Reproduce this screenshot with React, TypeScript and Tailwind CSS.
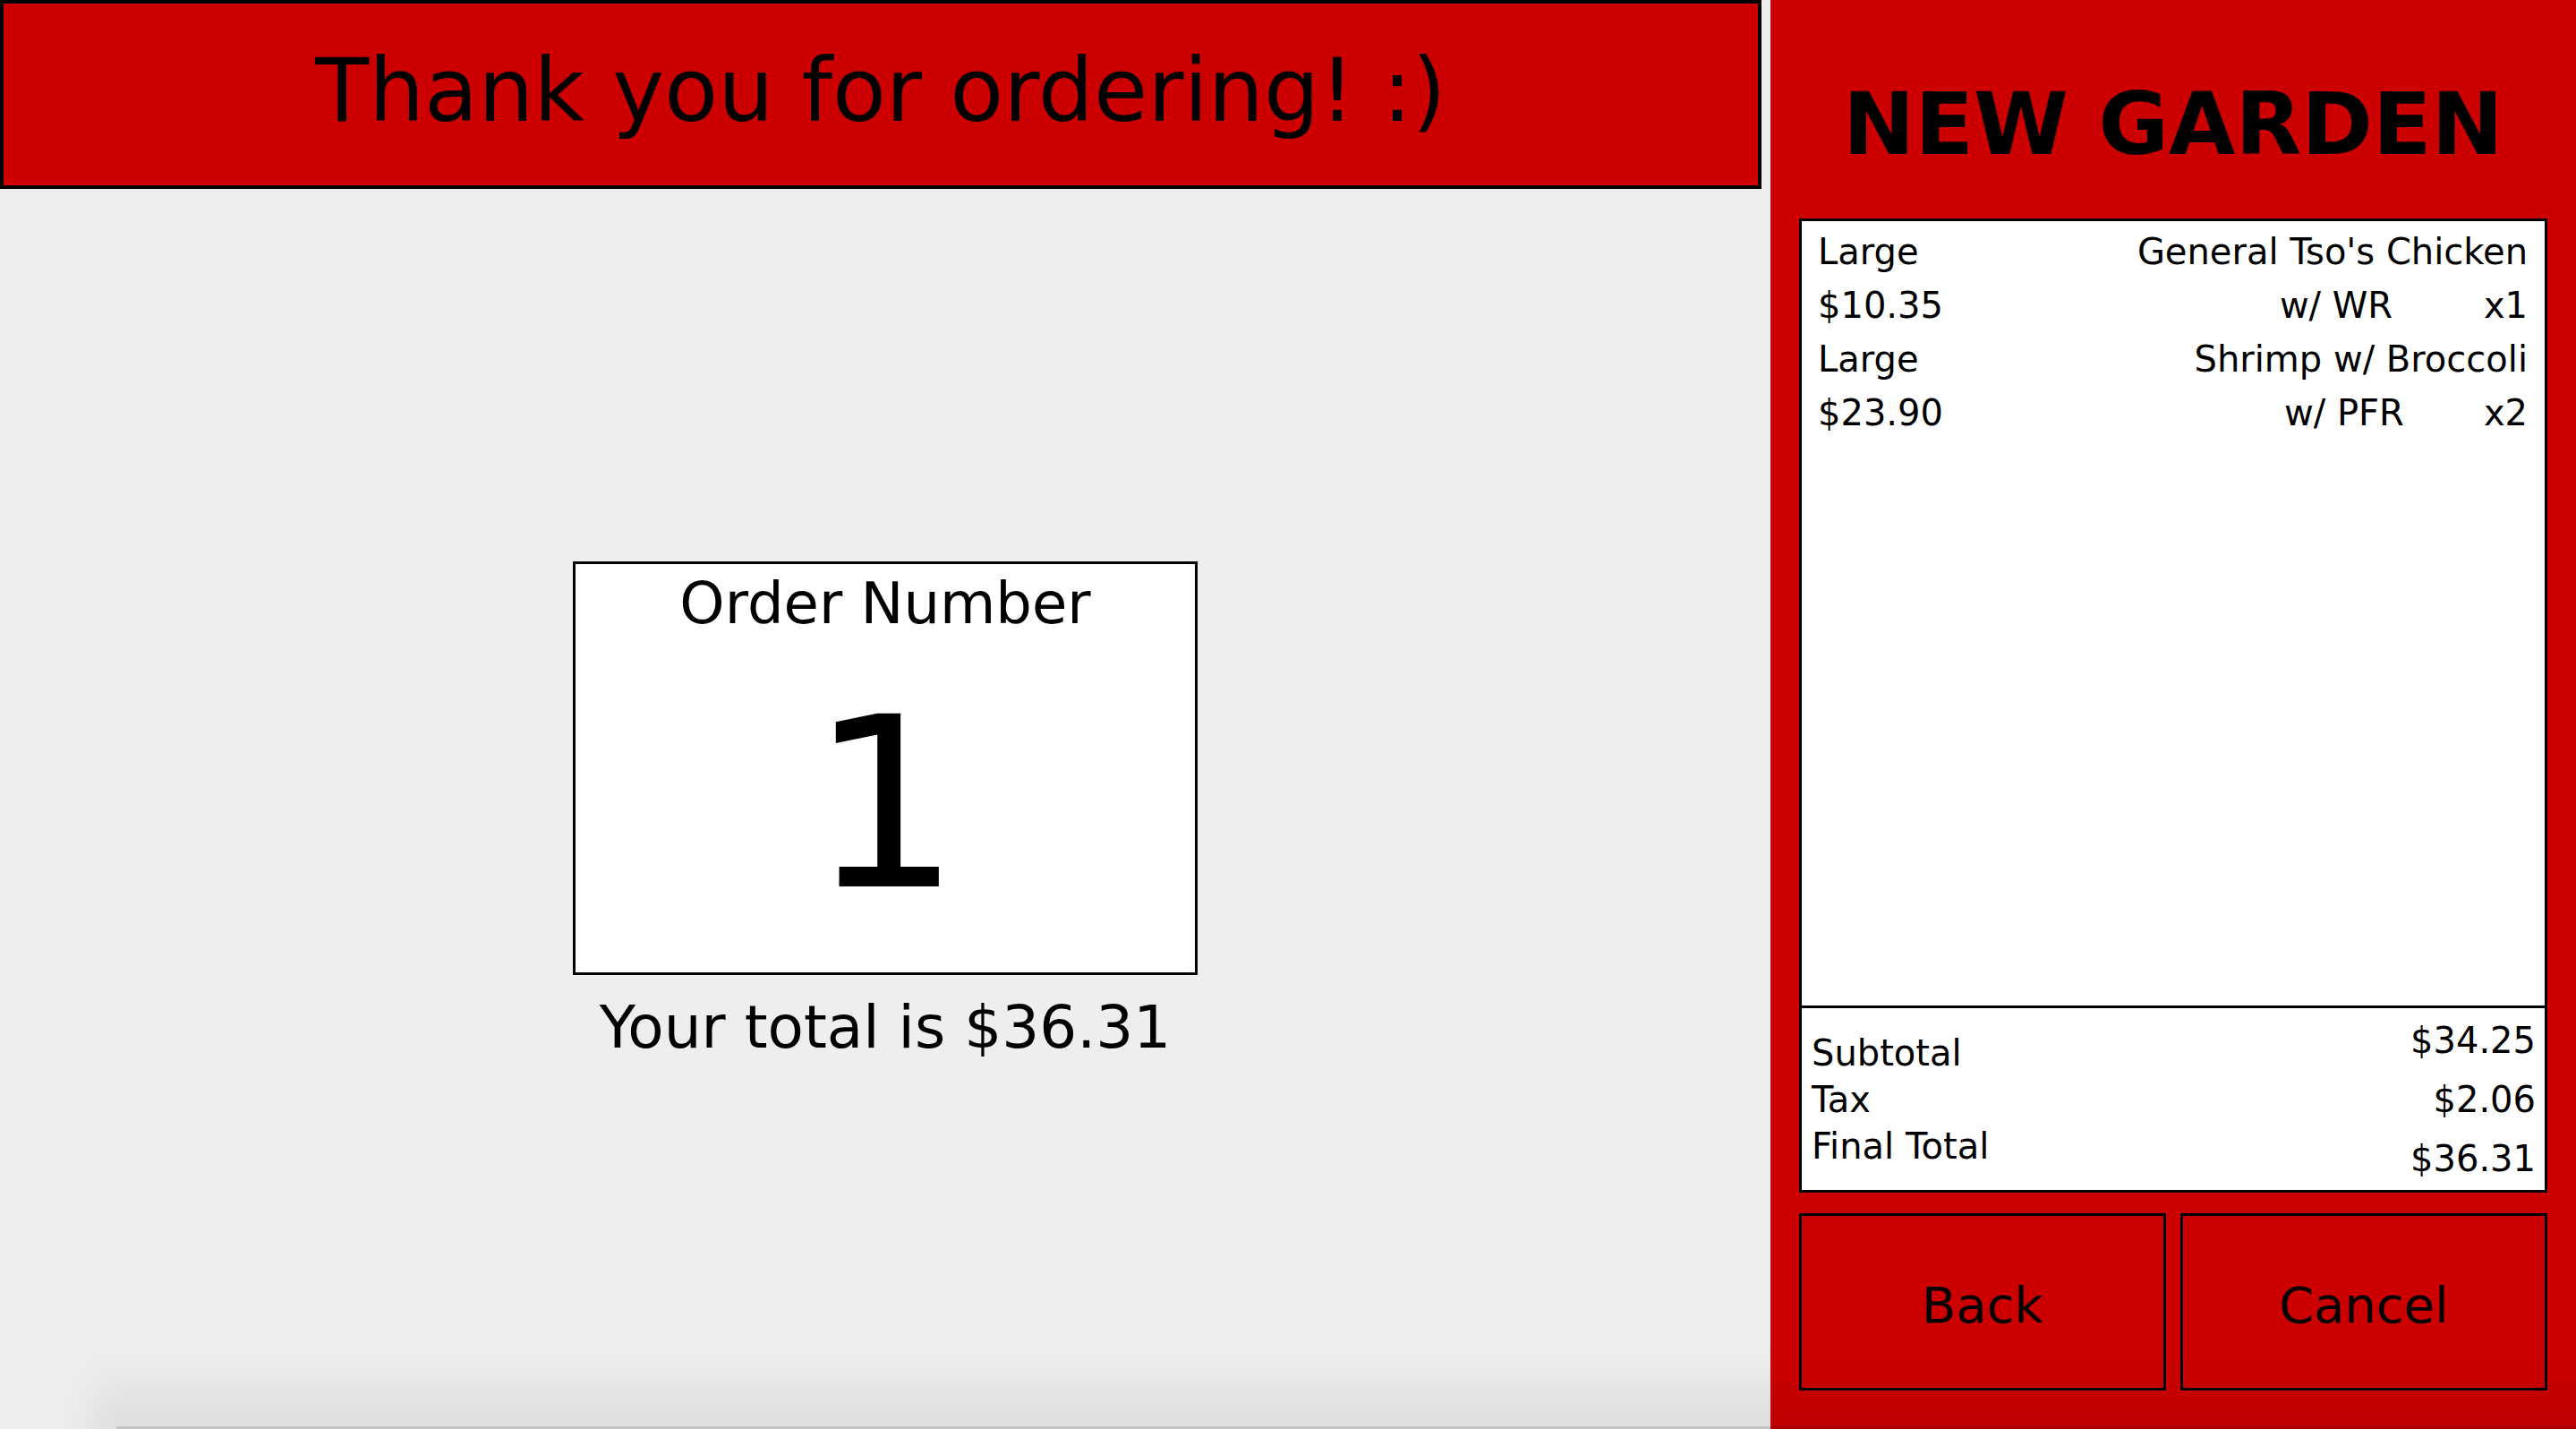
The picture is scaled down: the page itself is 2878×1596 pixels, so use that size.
import React from "react";

const font = { fontFamily: '"DejaVu Sans", Verdana, sans-serif' };

export default function App() {
  return (
    <div
      className="relative flex h-[1596px] w-[2878px] overflow-hidden bg-[#eeeeee] text-black font-['DejaVu_Sans',sans-serif]"
      style={font}
    >
      {/* Left pane */}
      <div className="flex w-[1978px] flex-col pr-[10px]">
        <div className="flex h-[211px] w-full items-center justify-center border-4 border-black bg-[#cc0000] pb-[10px]">
          <span className="text-[98px] leading-[110px]">Thank you for ordering! :)</span>
        </div>
        <div className="flex flex-col items-center pl-[10px] pt-[416px]">
          <div className="flex h-[462px] w-[698px] flex-col items-center border-[3px] border-black bg-white pt-[6px]">
            <div className="text-[64px] leading-[76px]">Order Number</div>
            <div className="mt-[54px] text-[265px] leading-[265px]">1</div>
          </div>
          <div className="mt-[20px] text-[66px] leading-[78px]">Your total is $36.31</div>
        </div>
      </div>

      {/* Right pane */}
      <div className="flex w-[900px] flex-col bg-[#cc0000] px-[32px]">
        <div className="pt-[91px] text-center text-[96px] font-bold leading-[96px]">NEW GARDEN</div>
        <div className="mt-[57px] flex h-[1088px] flex-col border-[3px] border-black bg-white">
          <div className="flex-1 pl-[18px] pr-[19px] pt-[4px] text-[40px] leading-[60px]">
            <div className="flex justify-between">
              <span>Large</span>
              <span>General Tso's Chicken</span>
            </div>
            <div className="flex justify-between">
              <span>$10.35</span>
              <span className="whitespace-pre">{"w/ WR        x1"}</span>
            </div>
            <div className="flex justify-between">
              <span>Large</span>
              <span>Shrimp w/ Broccoli</span>
            </div>
            <div className="flex justify-between">
              <span>$23.90</span>
              <span className="whitespace-pre">{"w/ PFR       x2"}</span>
            </div>
          </div>
          <div className="flex h-[206px] items-center justify-between border-t-[3px] border-black pl-[11px] pr-[10px] text-[40px]">
            <div className="flex flex-col leading-[52px]">
              <span>Subtotal</span>
              <span>Tax</span>
              <span>Final Total</span>
            </div>
            <div className="flex flex-col items-end leading-[66px]">
              <span>$34.25</span>
              <span>$2.06</span>
              <span>$36.31</span>
            </div>
          </div>
        </div>
        <div className="mt-[23px] grid h-[198px] grid-cols-2 gap-[16px]">
          <button className="flex items-center justify-center border-[3px] border-black bg-[#cc0000] pt-[7px] text-[56px]">
            Back
          </button>
          <button className="flex items-center justify-center border-[3px] border-black bg-[#cc0000] pt-[7px] text-[56px]">
            Cancel
          </button>
        </div>
      </div>

      {/* window shadow at bottom */}
      <div className="pointer-events-none absolute bottom-[-20px] left-[100px] right-[-40px] h-[100px] bg-gradient-to-b from-transparent to-black/[0.09] blur-[20px]" />
      <div className="pointer-events-none absolute bottom-0 left-[130px] right-0 h-[3px] bg-black/[0.12]" />
    </div>
  );
}
